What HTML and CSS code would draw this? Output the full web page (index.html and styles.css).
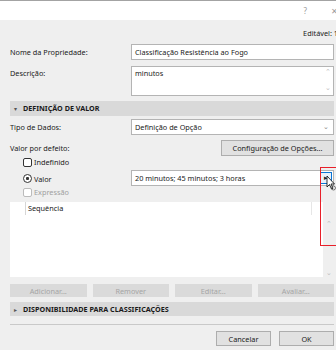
FILE: index.html
```html
<!DOCTYPE html>
<html lang="pt">
<head>
  <meta charset="UTF-8">
  <title>Definição de Propriedade</title>
  <link rel="stylesheet" href="styles.css">
</head>
<body>
  <div class="titlebar">
    <span class="help">?</span>
    <span class="close">&#x2715;</span>
  </div>
  <div class="dialog">
    <div class="editable">Editável: 1</div>

    <div class="row">
      <div class="label">Nome da Propriedade:</div>
      <div class="input">Classificação Resistência ao Fogo</div>
    </div>

    <div class="row desc">
      <div class="label">Descrição:</div>
      <div class="input textarea">
        <span>minutos</span>
        <div class="mini-scroll"><span>&#x2303;</span><span>&#x2304;</span></div>
      </div>
    </div>

    <div class="section"><span class="tri">&#x25BE;</span>DEFINIÇÃO DE VALOR</div>

    <div class="row select-row">
      <div class="label">Tipo de Dados:</div>
      <div class="input select">
        <span>Definição de Opção</span>
        <span class="caret">&#x2304;</span>
      </div>
    </div>

    <div class="row default-row">
      <div class="label">Valor por defeito:</div>
      <button class="btn config">Configuração de Opções...</button>
    </div>

    <div class="opt"><span class="check"></span>Indefinido</div>
    <div class="row value-row">
      <div class="opt radio-opt"><span class="radio"></span>Valor</div>
      <div class="input value">
        <span>20 minutos; 45 minutos; 3 horas</span>
        <span class="arrow-btn">&#x25B8;</span>
      </div>
    </div>
    <div class="opt disabled"><span class="check"></span>Expressão</div>

    <div class="list">
      <div class="list-body">
        <div class="list-head">
          <span class="col">Sequência</span>
        </div>
      </div>
      <div class="list-scroll"><span>&#x2303;</span><span>&#x2304;</span></div>
    </div>

    <div class="actions">
      <button class="btn off">Adicionar...</button>
      <button class="btn off">Remover</button>
      <button class="btn off">Editar...</button>
      <button class="btn off">Avaliar...</button>
    </div>

    <div class="section closed"><span class="tri">&#x25B8;</span>DISPONIBILIDADE PARA CLASSIFICAÇÕES</div>

    <div class="sep"></div>

    <div class="footer">
      <button class="btn">Cancelar</button>
      <button class="btn">OK</button>
    </div>
  </div>

  <!-- highlight + mouse pointer lying over the dialog -->
  <div class="highlight"></div>
  <svg class="pointer" width="10" height="16" viewBox="0 0 10 16">
    <path d="M1 1 L1 12 L3.5 9.5 L5.5 14 L7 13.3 L5 9 L8.5 9 Z" fill="#fff" stroke="#000" stroke-width="0.8"/>
    <circle cx="7.5" cy="13" r="2" fill="none" stroke="#444" stroke-width="0.7"/>
  </svg>
</body>
</html>
```

FILE: styles.css
```css
body {
  margin: 0;
  width: 336px;
  height: 350px;
  overflow: hidden;
  position: relative;
  background: #efefef;
  font-family: "Noto Sans", "Open Sans", sans-serif;
  font-size: 7.3px;
  color: #1a1a1a;
}
.titlebar {
  height: 19px;
  border-top: 1px solid #a3a3a3;
  background: #fff;
  display: flex;
  justify-content: flex-end;
  align-items: center;
  color: #9a9a9a;
  font-size: 8px;
}
.help {
  margin-right: 24px;
}
.close {
  margin-right: -2px;
  font-size: 8px;
}
.dialog {
  padding: 0 2px 0 10px;
}
.editable {
  text-align: right;
  height: 12px;
  line-height: 12px;
  margin-top: 7px;
  margin-right: -4px;
}
.row {
  display: flex;
  align-items: center;
}
.label {
  width: 121px;
  flex: none;
}
.input {
  flex: 1;
  height: 14px;
  line-height: 14px;
  background: #fff;
  border: 1px solid #b4b4b4;
  padding-left: 3px;
  display: flex;
  justify-content: space-between;
  align-items: center;
}
.row:nth-child(2) {
  margin-top: 5px;
}
.desc {
  margin-top: 6px;
  align-items: flex-start;
}
.desc .label {
  margin-top: 2px;
}
.textarea {
  height: 28px;
  align-items: flex-start;
  line-height: 12px;
}
.mini-scroll {
  display: flex;
  flex-direction: column;
  justify-content: space-between;
  height: 26px;
  width: 10px;
  color: #c0c0c0;
  font-size: 7px;
  line-height: 10px;
  text-align: center;
}
.section {
  margin-top: 5px;
  height: 15px;
  line-height: 15px;
  background: #d9d9d9;
  font-weight: bold;
  font-size: 7.2px;
  padding-left: 4px;
}
.section .tri {
  display: inline-block;
  width: 9px;
  font-size: 6px;
  color: #555;
  font-weight: normal;
}
.select-row {
  margin-top: 3px;
}
.caret {
  color: #888;
  width: 10px;
  font-size: 7px;
}
.default-row {
  margin-top: 5px;
  justify-content: space-between;
}
.btn {
  font-family: inherit;
  font-size: 7.3px;
  color: #1a1a1a;
  background: #e1e1e1;
  border: 1px solid #adadad;
  height: 15px;
  padding: 0;
}
.config {
  width: 113px;
  height: 16px;
}
.opt {
  display: flex;
  align-items: center;
  height: 12px;
  padding-left: 13px;
}
.opt.disabled {
  color: #a0a0a0;
}
.check, .radio {
  width: 7px;
  height: 7px;
  border: 1px solid #333;
  background: #fff;
  margin-right: 2px;
  border-radius: 2px;
  box-sizing: content-box;
}
.disabled .check {
  border-color: #bbb;
}
.radio {
  border-radius: 50%;
  position: relative;
}
.radio::after {
  content: "";
  position: absolute;
  left: 2px;
  top: 2px;
  width: 3px;
  height: 3px;
  background: #333;
  border-radius: 1px;
}
.opt:first-of-type {
  margin-top: 1px;
}
.value-row {
  margin-top: 2px;
}
.radio-opt {
  width: 108px;
}
.value {
  padding-right: 1px;
}
.arrow-btn {
  width: 10px;
  height: 10px;
  border: 1px solid #0a74d4;
  background: #e8f1fb;
  font-size: 7px;
  line-height: 10px;
  text-align: center;
  color: #222;
}
.list {
  margin-top: 4px;
  height: 75px;
  display: flex;
}
.list-body {
  flex: 1;
  background: #fff;
}
.list-head {
  margin-left: 15px;
  width: 283px;
  height: 13px;
  border-left: 1px solid #d6d6d6;
  border-right: 1px solid #e6e6e6;
  line-height: 13px;
  padding-left: 2px;
}
.list-scroll {
  width: 11px;
  display: flex;
  flex-direction: column;
  justify-content: space-between;
  align-items: center;
  color: #bdbdbd;
  font-size: 7px;
  padding: 18px 0 0;
  line-height: 8px;
}
.actions {
  margin-top: 7px;
  display: flex;
  gap: 6px;
}
.actions .btn {
  flex: 1;
  height: 13px;
}
.btn.off {
  background: #dadada;
  border-color: #dadada;
  color: #a5a5a5;
}
.closed {
  margin-top: 5px;
  height: 14px;
  line-height: 14px;
}
.sep {
  margin-top: 8px;
  height: 1px;
  background: #c9c9c9;
}
.footer {
  margin-top: 6px;
  display: flex;
  justify-content: flex-end;
  gap: 8px;
}
.footer .btn {
  width: 55px;
  height: 15px;
}
.highlight {
  position: absolute;
  left: 320px;
  top: 167px;
  width: 20px;
  height: 77px;
  border: 1px solid #e8202a;
}
.pointer {
  position: absolute;
  left: 326px;
  top: 175px;
}
```
